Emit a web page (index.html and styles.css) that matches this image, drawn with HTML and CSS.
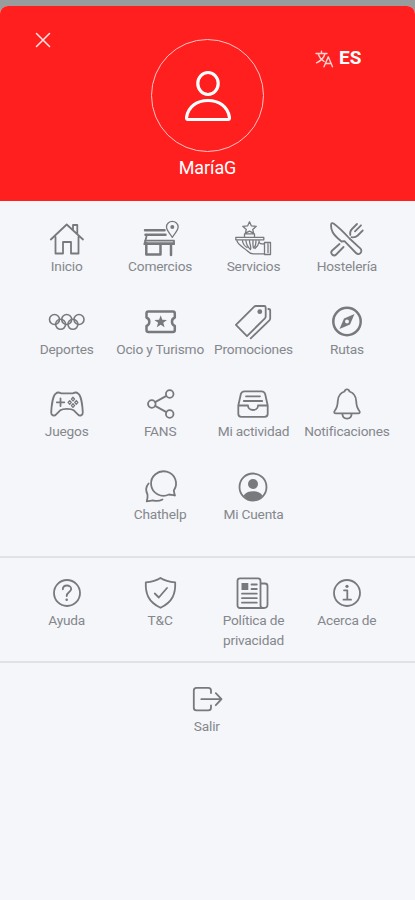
FILE: index.html
```html
<!DOCTYPE html>
<html lang="es">
<head>
<meta charset="utf-8">
<title>Menú</title>
<link rel="stylesheet" href="styles.css">
</head>
<body>
<div class="sheet">
  <header class="header">
    <button class="close" aria-label="Cerrar"><svg viewBox="0 0 16 16"><path d="M1.5 1.5l13 13M14.500 1.500l-13 13"/></svg></button>
    <div class="profile">
      <div class="avatar"><svg viewBox="0 0 50 54"><ellipse cx="25" cy="14.500" rx="10.200" ry="11"/><path d="M4.500 50.500C3.500 50.500 3.500 49 3.600 48C5.500 37.500 14 31.500 25 31.500S44.500 37.500 46.400 48c.1 1 .1 2.500-.9 2.500z"/></svg></div>
      <div class="name">MaríaG</div>
    </div>
    <div class="lang"><svg viewBox="0 0 18 18"><path d="M1 3.500h11M6.500 1.200v2.300M3.200 3.500c1 4 3.600 6.500 6 8M10 3.500C9 8 5.500 11 1.500 12.800M9 16.800L13.300 6.800 17.500 16.800M10.500 13.500h5.600"/></svg><b>ES</b></div>
  </header>

  <nav class="menu">
    <a class="item"><svg class="icon" viewBox="0 0 36 36"><path d="M6.500 16v16.500h7.500V21h8v11.500h7.500V16M1.800 18.500L17.700 3.500 34 18.500M24 9V4h4.300v9"/></svg><span>Inicio</span></a>
    <a class="item"><svg class="icon" viewBox="0 0 36 36"><path class="bold" d="M3 9.200h19.500M3.500 13.800h20"/><path d="M4.500 15.500L2.300 23.200H32v-3.500H3"/><path class="bold" d="M4.300 22v11.600h14.200V24M3.500 22.500h28M29 24v10"/><path class="thin" d="M30.300 16.300c-2.200-3.600-5.800-6.800-5.800-10.300a5.800 5.600 0 0 1 11.600 0c0 3.500-3.600 6.700-5.800 10.300z"/><circle class="fill" cx="30.300" cy="6" r="2"/></svg><span>Comercios</span></a>
    <a class="item"><svg class="icon thin" viewBox="0 0 36 36"><path d="M14.500.8l1.800 4 5 .5-3.600 3.100.9 3.800-4.100-2-4.100 2 .9-3.800-3.600-3.100 5-.5zM9.500 13v3M19.500 13v3M10 12.800h9M.8 16.300h28v2.500H.8zM2 20c1.500 4.500 7 6.500 10.500 10 2 2.300 3.500 2.800 6 2.800h11V21.500h6v12h-6M33 23v8.500M7.500 20c.5 3 2 5 4.500 6.500M11 20c.3 3.500 1.700 6 4.500 8.500 1-2.500-.8-5-1-8.500M18 20c0 2.500-.4 4.500.5 7 2-1.500 2.500-4 2.500-7M24 20c0 3 2 3 5.500 3M24 21c-.5 3-2 5-4 6.500"/></svg><span>Servicios</span></a>
    <a class="item"><svg class="icon" viewBox="0 0 36 36"><path d="M2.200 3C1.500 8 4.500 13.500 8.500 17l4 3.500 3-.3L27 32a3 3 0 0 0 4.500-4.300L20.500 17.500C15 11.500 8 5 4.500 2.500 3.500 1.800 2.500 2 2.200 3zM10.500 23l-7.300 6.500a2.800 2.800 0 0 0 4 4L14.500 26"/><path d="M21.300 14c-.5-2 .2-4.500 1.700-6l5-5M26 10.300l6-6M22.500 16.200c2.500.3 4.700-.2 6.200-1.700l5-5"/></svg><span>Hostelería</span></a>

    <a class="item"><svg class="icon rings" viewBox="0 0 36 36"><circle cx="5.500" cy="15.500" r="5"/><circle cx="17.700" cy="15.500" r="5"/><circle cx="30" cy="15.500" r="5"/><circle cx="11.600" cy="20.300" r="5"/><circle cx="23.900" cy="20.300" r="5"/></svg><span>Deportes</span></a>
    <a class="item"><svg class="icon" viewBox="0 0 36 36"><path class="bold" d="M6.300 7.500h24.500c1.300 0 2 .7 2 2v4a4.600 4.600 0 0 0 0 8.500v4c0 1.300-.7 2-2 2H6.500c-1.300 0-2-.7-2-2v-4a4.600 4.600 0 0 0 0-8.500v-4c0-1.300.5-2 1.800-2z"/><path class="fill" d="M18.700 11.300l1.600 4.500 4.700.1-3.700 2.900 1.300 4.500-3.900-2.600-3.900 2.600 1.300-4.500-3.700-2.900 4.700-.1z"/></svg><span>Ocio y Turismo</span></a>
    <a class="item"><svg class="icon" viewBox="0 0 36 36"><path d="M.9 20.800L19 2.800c.6-.6 1-.8 1.800-.8h8.400c1 0 1.500.5 1.500 1.500v9c0 .8-.2 1.200-.8 1.800L12 32.100zM33.300 5c1.200 0 1.900.4 1.900 1.500v8c0 .8-.2 1.300-.8 1.900L15.700 34.300"/><circle class="fill" cx="24.800" cy="7.700" r="2.400"/></svg><span>Promociones</span></a>
    <a class="item"><svg class="icon" viewBox="0 0 36 36"><circle class="bold" cx="18" cy="17.500" r="13.700"/><path class="fill" fill-rule="evenodd" d="M25.500 10L21 20.500 10.500 25 15 14.500zM18 15.500a2 2 0 1 0 0 4 2 2 0 0 0 0-4z"/></svg><span>Rutas</span></a>

    <a class="item"><svg class="icon" viewBox="0 0 36 36"><path d="M7 7.500C8.500 6 10.500 6.500 12 7.300h12c1.500-.8 3.500-1.300 5 .2 3 1.500 4.500 12.500 4.800 19 .1 3-3 4-5 1.800l-4-4c-3-2-10.600-2-13.600 0l-4 4c-2 2.200-5.100 1.200-5-1.800C2.500 20 4 9 7 7.500zM11.500 12.500v7.500M7.800 16.300h7.500"/><path class="thin" d="M24 11.300l1.600 1.800L24 14.900l-1.600-1.800zM24 17.800l1.600 1.800-1.600 1.800-1.600-1.800zM20.700 14.600l1.600 1.800-1.600 1.800-1.600-1.800zM27.300 14.600l1.600 1.800-1.600 1.800-1.600-1.800z"/></svg><span>Juegos</span></a>
    <a class="item"><svg class="icon" viewBox="0 0 36 36"><circle cx="27.700" cy="8" r="3.800"/><circle cx="9.800" cy="18" r="3.800"/><circle cx="27.700" cy="28" r="3.800"/><path d="M13.100 16.100L24.400 9.900M13.100 19.900l11.300 6.200"/></svg><span>FANS</span></a>
    <a class="item"><svg class="icon" viewBox="0 0 36 36"><path d="M3.300 19.500L5.800 8.200C6.400 6 7.500 5.300 9.500 5.300h17c2 0 3.100.7 3.700 2.900l2.500 11.300v8.300c0 2-1 3-3 3H6.300c-2 0-3-1-3-3zh9.700c0 6 10 6 10 0h9.700M11 10.300h14M8.800 15h18.400"/></svg><span>Mi actividad</span></a>
    <a class="item"><svg class="icon" viewBox="0 0 36 36"><path d="M18 3.300c1.500 0 2.200.8 2.500 2.200 4.500 1.500 6.500 5 6.700 9.500.2 5 .8 7 3 9.800 1.200 1.500.5 2.500-1 2.500H6.800c-1.500 0-2.200-1-1-2.500 2.200-2.800 2.800-4.800 3-9.800.2-4.500 2.200-8 6.700-9.500.3-1.400 1-2.200 2.500-2.200zM13.300 27.500c.3 6.700 9.100 6.700 9.400 0"/></svg><span>Notificaciones</span></a>

    <a class="item second"><svg class="icon" viewBox="0 0 36 36"><path d="M31.800 21.500A12.500 12.200 0 1 0 27 25.500c2 .2 3.500.8 6 1-.8-1.800-1-3.500-1.200-5zM6.600 14.500C3.500 18 3.800 22 5.500 25.500c.3 2.500 0 4.500-.8 6.800 2.300-.2 4.300-.5 6.300-1 3 1 6.500.8 9.500-.8"/></svg><span>Chathelp</span></a>
    <a class="item"><svg class="icon" viewBox="0 0 36 36"><circle cx="18" cy="18" r="13.500"/><circle class="fill" cx="18" cy="15" r="5"/><path class="fill" d="M8.500 26.500c2.500-3.300 6-4.200 9.500-4.200s7 .9 9.500 4.200C25 29.800 22 31.300 18 31.300s-7-1.500-9.500-4.800z"/></svg><span>Mi Cuenta</span></a>
  </nav>

  <nav class="menu info">
    <a class="item"><svg class="icon" viewBox="0 0 36 36"><circle cx="18" cy="18" r="13"/><path d="M13.800 14.300c0-5 8.400-5 8.400-.3 0 3-4.500 3.200-4.500 7"/><circle class="fill" cx="17.700" cy="24.700" r="1.300"/></svg><span>Ayuda</span></a>
    <a class="item"><svg class="icon" viewBox="0 0 36 36"><path d="M18.500 3C14 6 9 7 3.800 7.300 3.300 19 6.500 27 18.500 32.800 30.500 27 33.700 19 33.200 7.300 28 7 23 6 18.500 3zM12.800 18.500l4 4L25 13"/></svg><span>T&amp;C</span></a>
    <a class="item"><svg class="icon" viewBox="0 0 36 36"><path d="M5 3.300h18c1.500 0 2.500 1 2.500 2.500v24.700c0 1.500 1 2.500 3 2.500H5c-1.500 0-2.500-1-2.500-2.500V5.800c0-1.500 1-2.500 2.500-2.500zM25.500 8.500h4.300c1.700 0 2.700 1 2.700 2.500v18.500c0 2.300-1.200 3.500-3.500 3.500M16.500 9.500h5.300M16.500 14h5.300M7 18.700h14.800M7 23.200h14.800M7 27.700h14.800"/><path class="fill" d="M6.500 8h6.800v7H6.500z"/></svg><span>Política de privacidad</span></a>
    <a class="item"><svg class="icon" viewBox="0 0 36 36"><circle cx="18" cy="18" r="13"/><path d="M15 15.300h3.300v9.200M14.500 24.700h7.500"/><circle class="fill" cx="18" cy="11.300" r="1.600"/></svg><span>Acerca de</span></a>
  </nav>

  <nav class="exit">
    <a class="item"><svg class="icon" viewBox="0 0 36 36"><path d="M22 12V9.500c0-1.800-.9-2.700-2.700-2.700H7.500c-1.800 0-2.700.9-2.700 2.700v17.200c0 1.800.9 2.700 2.700 2.700h11.800c1.800 0 2.700-.9 2.700-2.700V24.300M12.300 18.200h20M26.800 12.200l5.700 6-5.700 6"/></svg><span>Salir</span></a>
  </nav>
</div>
</body>
</html>
```
FILE: styles.css
```css
* { box-sizing: border-box; }

body {
  margin: 0;
  padding-top: 6px;
  height: 900px;
  overflow: hidden;
  background: #999c9c;
  font-family: Roboto, "Liberation Sans", sans-serif;
}

.sheet {
  height: 894px;
  border-radius: 8px 8px 0 0;
  background: #f4f6fa;
  overflow: hidden;
}

.header {
  display: grid;
  grid-template-columns: 1fr 113px 1fr;
  height: 195px;
  background: #ff1f1f;
  color: #fff;
}

svg {
  display: block;
  fill: none;
  stroke: currentColor;
  stroke-linecap: round;
  stroke-linejoin: round;
  overflow: visible;
}

.close {
  width: 16px;
  height: 16px;
  margin: 26px 0 0 34.500px;
  padding: 0;
  border: 0;
  background: none;
  color: #ffe5e5;
}

.close svg { stroke-width: 1.5; }

.profile {
  display: flex;
  flex-direction: column;
  align-items: center;
  padding-top: 33px;
}

.avatar {
  display: flex;
  justify-content: center;
  width: 113px;
  height: 113px;
  padding-top: 29px;
  border: 1.500px solid #ffc4c4;
  border-radius: 50%;
}

.avatar svg {
  width: 50px;
  height: 54px;
  stroke-width: 3.200;
}

.name {
  margin-top: 5px;
  font-size: 18px;
  line-height: 22px;
  letter-spacing: -0.1px;
}

.lang {
  display: flex;
  align-items: center;
  gap: 6px;
  height: 24px;
  margin: 40px 0 0 51px;
  font-size: 19px;
  line-height: 24px;
}

.lang svg {
  width: 18px;
  height: 18px;
  margin-top: 2px;
  stroke-width: 1.400;
  color: #ffd2d2;
}

.menu {
  display: grid;
  grid-template-columns: repeat(4, 93.400px);
  grid-auto-rows: 82.700px;
  justify-content: center;
  height: 357px;
  padding: 20px 1.400px 0 0;
  border-bottom: 2px solid #e0e2e6;
}

.item {
  display: flex;
  flex-direction: column;
  align-items: center;
  color: #85878b;
  font-size: 13.700px;
  line-height: 20px;
  letter-spacing: -0.2px;
  text-align: center;
}

.item span { margin-top: -1px; }

.second { grid-column-start: 2; }

.icon {
  width: 36px;
  height: 36px;
  color: #77797c;
  stroke-width: 1.800;
}

.rings { stroke-width: 1.600; }
.thin { stroke-width: 1.300; }
.bold { stroke-width: 2.500; }
.fill { fill: currentColor; stroke: none; }

.info {
  height: 105px;
  padding-top: 17px;
}

.exit {
  display: flex;
  justify-content: center;
  padding: 18px 1.400px 0 0;
}
```
